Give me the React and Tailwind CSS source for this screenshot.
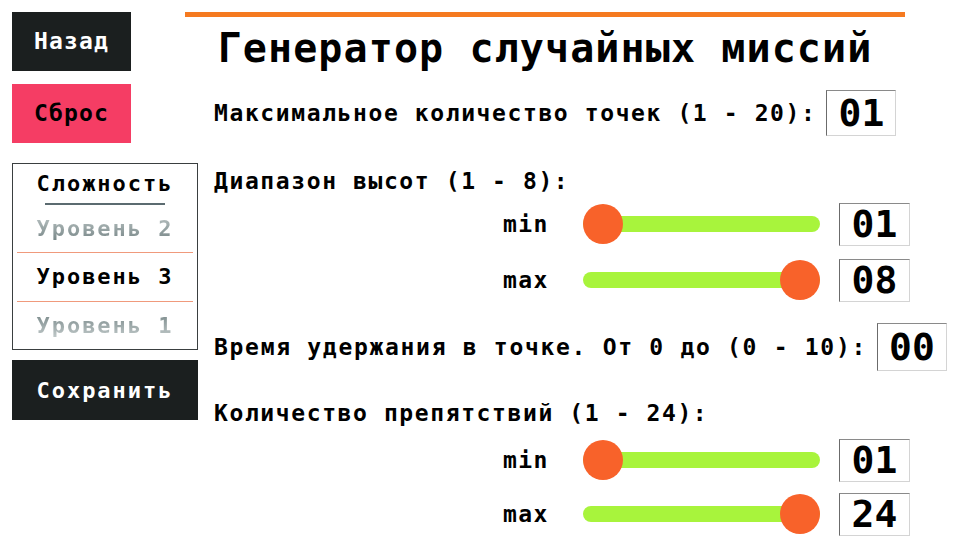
import React, { useState } from "react";

const mono = { fontFamily: '"DejaVu Sans Mono", "Liberation Mono", monospace' };

const NumBox = ({ value, className = "" }) => (
  <div
    className={`flex shrink-0 items-center justify-center border border-[#d4d4d4] border-l-[#6b6b6b] border-t-[#8a8a8a] bg-white text-[38px] font-bold leading-none text-black ${className}`}
  >
    {value}
  </div>
);

const RangeRow = ({ label, value, thumb, className = "" }) => (
  <div className={`flex h-[44px] items-center pl-[318px] ${className}`}>
    <span className="w-[80px] text-[23px] font-bold tracking-[1.4px] text-black">{label}</span>
    <div className="relative flex h-[44px] w-[237px] items-center">
      <div className="h-[16px] w-full rounded-full bg-[#a8f43c]" />
      <div
        className={`absolute top-[2px] h-[40px] w-[40px] rounded-full bg-[#f8622a] ${
          thumb === "left" ? "left-0" : "right-0"
        }`}
      />
    </div>
    <NumBox value={value} className="ml-[19px] h-[43px] w-[71px]" />
  </div>
);

const Level = ({ children, tone }) => {
  const toneClass =
    tone === "active"
      ? "text-black"
      : tone === "down"
      ? "bg-gradient-to-b from-[#c3cbcb] to-[#6e7e7f] bg-clip-text text-transparent"
      : "bg-gradient-to-b from-[#6e7e7f] to-[#cfd6d6] bg-clip-text text-transparent";
  return (
    <div className="flex h-[48px] items-center justify-center">
      <span className={`text-[22px] font-bold tracking-[2px] ${toneClass}`}>{children}</span>
    </div>
  );
};

export default function App() {
  const [points] = useState("01");

  return (
    <div style={mono} className="flex h-[541px] w-[960px] overflow-hidden bg-white">
      {/* left column */}
      <div className="flex w-[198px] shrink-0 flex-col pl-3 pt-3">
        <button className="flex h-[59px] w-[119px] items-center justify-center bg-[#1b1f1f] text-[23px] font-bold tracking-[1.2px] text-white">
          Назад
        </button>
        <button className="mt-[13px] flex h-[59px] w-[119px] items-center justify-center bg-[#f53d64] text-[23px] font-bold tracking-[1.2px] text-black">
          Сброс
        </button>

        <div className="mt-[20px] flex h-[187px] w-[186px] flex-col border border-[#3a3f40] px-[4px]">
          <div className="flex h-[39px] items-center justify-center">
            <span className="text-[22px] font-bold tracking-[2px] text-black">Сложность</span>
          </div>
          <div className="mx-auto h-[2px] w-[120px] bg-[#5b6b70]" />
          <Level tone="down">Уровень 2</Level>
          <div className="h-px bg-[#f09a7c]" />
          <Level tone="active">Уровень 3</Level>
          <div className="h-px bg-[#f09a7c]" />
          <Level tone="up">Уровень 1</Level>
        </div>

        <button className="mt-[10px] flex h-[60px] w-[186px] items-center justify-center bg-[#1b1f1f] text-[22px] font-bold tracking-[2px] text-white">
          Сохранить
        </button>
      </div>

      {/* right column */}
      <div className="-ml-[13px] flex w-[775px] flex-col pt-3 text-black">
        <div className="h-[5px] w-[720px] bg-[#f57a20]" />
        <h1 className="mt-[5px] flex h-[52px] w-[720px] items-center justify-center whitespace-nowrap text-[40px] font-bold tracking-[1.1px]">
          Генератор случайных миссий
        </h1>

        <div className="mt-[16px] flex h-[46px] items-center pl-[29px]">
          <span className="whitespace-nowrap text-[23px] font-bold tracking-[1.6px]">Максимальное количество точек (1 - 20):</span>
          <NumBox value={points} className="ml-[10px] h-[46px] w-[70px]" />
        </div>

        <div className="mt-[30px] flex h-[30px] items-center pl-[29px]">
          <span className="whitespace-nowrap text-[23px] font-bold tracking-[1.6px]">Диапазон высот (1 - 8):</span>
        </div>
        <RangeRow label="min" value="01" thumb="left" className="mt-[6px]" />
        <RangeRow label="max" value="08" thumb="right" className="mt-[12px]" />

        <div className="mt-[21px] flex h-[48px] items-center pl-[29px]">
          <span className="whitespace-nowrap text-[23px] font-bold tracking-[1.7px]">Время удержания в точке. От 0 до (0 - 10):</span>
          <NumBox value="00" className="ml-[10px] h-[48px] w-[70px]" />
        </div>

        <div className="mt-[27px] flex h-[30px] items-center pl-[29px]">
          <span className="whitespace-nowrap text-[23px] font-bold tracking-[1.6px]">Количество препятствий (1 - 24):</span>
        </div>
        <RangeRow label="min" value="01" thumb="left" className="mt-[10px]" />
        <RangeRow label="max" value="24" thumb="right" className="mt-[10px]" />
      </div>
    </div>
  );
}
